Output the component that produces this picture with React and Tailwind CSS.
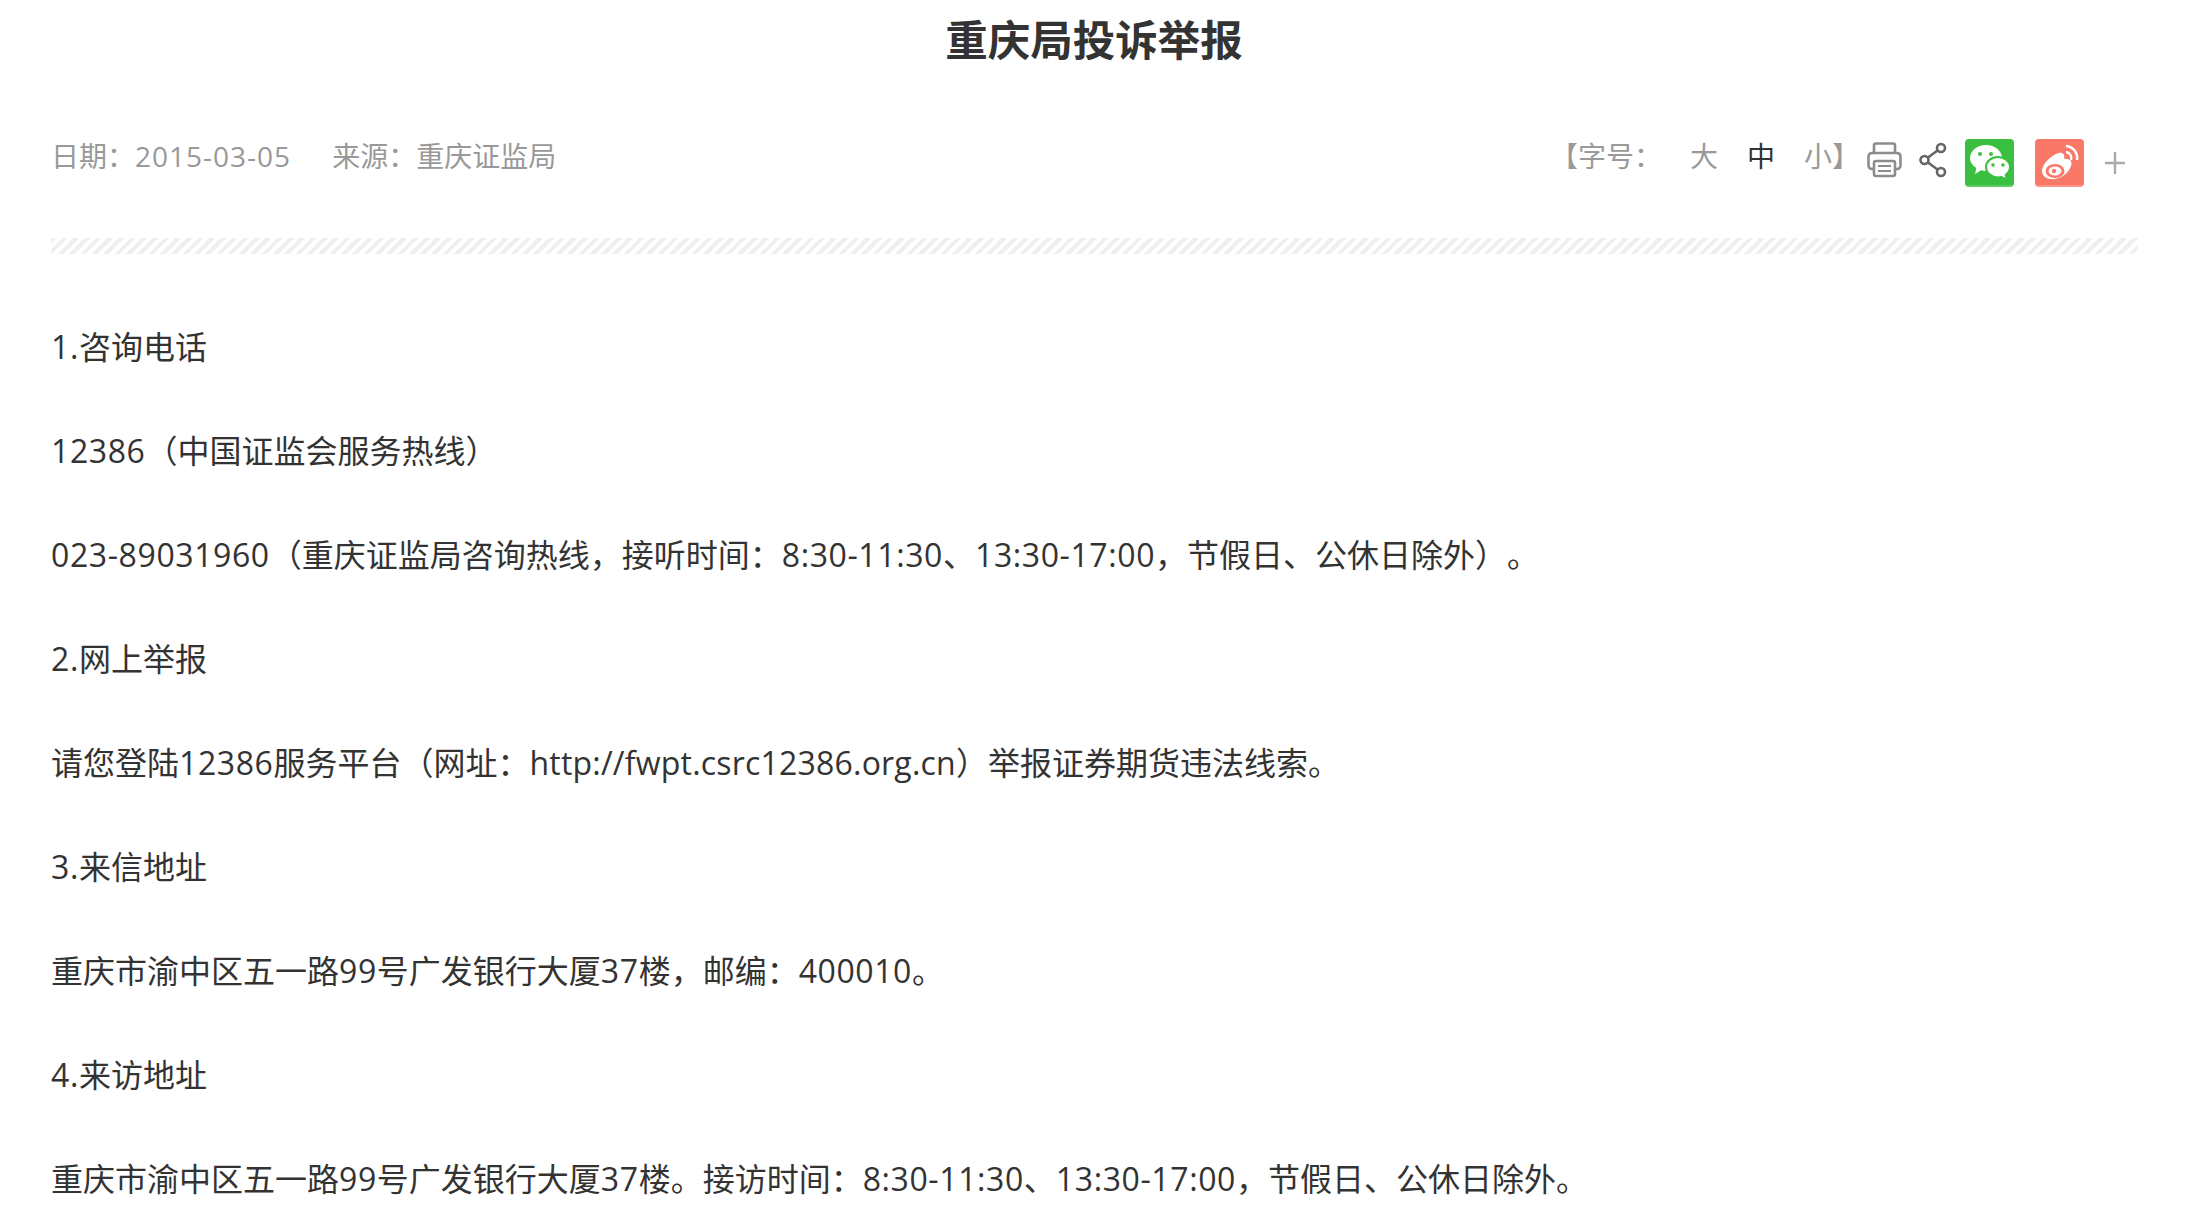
const lines = [
  '1.咨询电话',
  '12386（中国证监会服务热线）',
  '023-89031960（重庆证监局咨询热线，接听时间：8:30-11:30、13:30-17:00，节假日、公休日除外）。',
  '2.网上举报',
  '请您登陆12386服务平台（网址：http://fwpt.csrc12386.org.cn）举报证券期货违法线索。',
  '3.来信地址',
  '重庆市渝中区五一路99号广发银行大厦37楼，邮编：400010。',
  '4.来访地址',
  '重庆市渝中区五一路99号广发银行大厦37楼。接访时间：8:30-11:30、13:30-17:00，节假日、公休日除外。',
];

// latin runs are a bit wider in the reference font, digits more than letters
const Text = ({ children }) =>
  children.split(/([0-9A-Za-z:/.-]+)/).map((part, i) =>
    i % 2 ? (
      <span key={i} className={/[a-z]/.test(part) ? 'tracking-[0.2px]' : 'tracking-[0.6px]'}>{part}</span>
    ) : (
      part
    ),
  );

const PrintIcon = () => (
  <svg width="35" height="36" viewBox="0 0 35 36" fill="none" stroke="#8c8c8c" strokeWidth="2.6">
    <path d="M7 11V3.5A2 2 0 0 1 9 1.5h17a2 2 0 0 1 2 2V11" />
    <path d="M6.5 27H5a3.5 3.5 0 0 1-3.5-3.5v-9A3.5 3.5 0 0 1 5 11h25a3.5 3.5 0 0 1 3.5 3.5v9A3.5 3.5 0 0 1 30 27h-1.5" />
    <rect x="7" y="19" width="21" height="15" rx="2" />
    <path d="M11 24h13M11 29h13" strokeWidth="2" />
  </svg>
);

const ShareIcon = () => (
  <svg width="28" height="36" viewBox="0 0 28 36" fill="none" stroke="#666" strokeWidth="2.6">
    <circle cx="22" cy="6" r="4" />
    <circle cx="5.5" cy="18" r="4" />
    <circle cx="22" cy="30" r="4" />
    <path d="M9 15.5 18.5 8.5M9 20.5l9.5 7" />
  </svg>
);

const WechatIcon = () => (
  <svg width="49" height="48" viewBox="0 0 49 48">
    <path d="M21 6c8.800 0 16 5.800 16 13s-7.200 13-16 13c-1.800 0-3.500-.2-5-.7L10 35l1.300-6C7.500 26.600 5 23 5 19 5 11.800 12.200 6 21 6z" fill="#fff" />
    <path d="M33 18c6.600 0 12 4.500 12 10 0 3.100-1.700 5.800-4.300 7.700L42 41l-5.500-3c-1.100.3-2.300.4-3.500.4-6.600 0-12-4.700-12-10.400S26.400 18 33 18z" fill="#fff" stroke="#3abf41" strokeWidth="2" />
    <circle cx="15" cy="15" r="2" fill="#3abf41" />
    <circle cx="26" cy="15" r="2" fill="#3abf41" />
    <circle cx="28" cy="26" r="1.800" fill="#3abf41" />
    <circle cx="38" cy="26" r="1.800" fill="#3abf41" />
  </svg>
);

const WeiboIcon = () => (
  <svg width="49" height="48" viewBox="0 0 49 48">
    <path d="M7 32c0-7 9-16 17-18 5-1 6 3 5 6 5-1 9 2 7 7-3 9-13 14-21 13-5-1-8-4-8-8z" fill="#fff" />
    <ellipse cx="20" cy="32" rx="9.500" ry="7" fill="#f97868" />
    <ellipse cx="20" cy="32" rx="6.500" ry="4.500" fill="#fff" />
    <circle cx="19" cy="32" r="2.200" fill="#f97868" />
    <path d="M31 13a6 6 0 0 1 5 8M31 7a12 12 0 0 1 11 14" fill="none" stroke="#fff" strokeWidth="2.400" />
  </svg>
);

const PlusIcon = () => (
  <svg width="20" height="22" viewBox="0 0 20 22" fill="none" stroke="#aaa" strokeWidth="2.4">
    <path d="M0 11h20M10 0v22" />
  </svg>
);

const App = () => {
  return (
    <div className="h-[1228px] overflow-hidden bg-white pl-[51px] font-['Open_Sans','Noto_Sans_CJK_SC',sans-serif] text-[#333] [text-spacing-trim:space-all]">
      <h1 className="h-[80px] w-[2086px] text-center text-[42.5px] leading-[80px] font-bold">重庆局投诉举报</h1>

      <div className="mt-[44px] flex h-[64px] w-[2087px] items-center justify-between pr-[13px] text-[28px] text-[#999]">
        <div className="flex gap-[41px]">
          <span>日期：<span className="tracking-[1px]">2015-03-05</span></span>
          <span>来源：重庆证监局</span>
        </div>
        <div className="flex items-center">
          <span className="whitespace-pre">【字号：</span>
          <span className="ml-[28px]">大</span>
          <span className="ml-[29px] text-[#333]">中</span>
          <span className="ml-[29px]">小】</span>
          <span className="ml-[7px] mt-[7px]"><PrintIcon /></span>
          <span className="ml-[17px] mt-[7px]"><ShareIcon /></span>
          <span className="ml-[18px] mt-[14px] h-[48px] w-[49px] overflow-hidden rounded-[4px] border-b-2 border-[#5ccb62] bg-[#3abf41]"><WechatIcon /></span>
          <span className="ml-[21px] mt-[14px] h-[48px] w-[49px] overflow-hidden rounded-[4px] border-b-2 border-[#fb9487] bg-[#f97868]"><WeiboIcon /></span>
          <span className="ml-[21px] mt-[14px]"><PlusIcon /></span>
        </div>
      </div>

      <div className="mt-[50px] h-[16px] w-[2087px] bg-[repeating-linear-gradient(135deg,#efefef_0,#efefef_4px,#fff_4px,#fff_8px)]" />

      <div className="mt-[65px] flex flex-col gap-[48px] text-[32px] leading-[56px]">
        {lines.map((line) => (
          <p key={line}><Text>{line}</Text></p>
        ))}
      </div>
    </div>
  );
};

export default App;
